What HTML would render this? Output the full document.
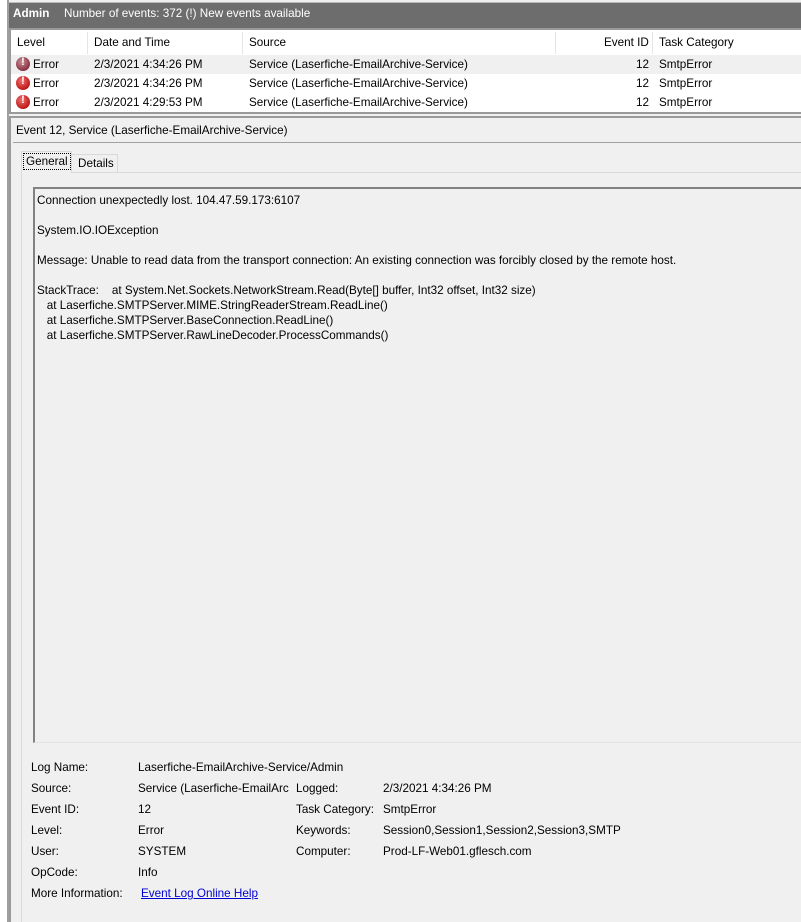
<!DOCTYPE html>
<html><head><style>
*{margin:0;padding:0;box-sizing:border-box}
body{width:801px;height:922px;background:#f0f0f0;font-family:"Liberation Sans",sans-serif;font-size:11.7px;color:#000;position:relative;overflow:hidden}
.a{position:absolute;white-space:nowrap}
.ic{position:absolute;width:14px;height:14px;border-radius:50%;background:radial-gradient(circle at 40% 35%,#f07070,#c01818 70%,#901010);}
.ic:after{content:"!";position:absolute;left:0;width:14px;top:-1px;text-align:center;color:#fff;font-weight:bold;font-size:11px}
</style></head><body>
<div class="a" style="left:0;top:0;width:9px;height:922px;background:#fff;border-right:1px solid #a0a0a0"></div>
<div class="a" style="left:7px;top:0;width:1px;height:922px;background:#a0a0a0"></div>
<div class="a" style="left:9px;top:2px;width:792px;height:26px;background:#6d6d6d;border-top:1px solid #bbb"></div>
<div class="a" style="left:13px;top:7px;color:#fff;font-weight:bold">Admin</div>
<div class="a" style="left:64px;top:7px;color:#fff">Number of events: 372 (!) New events available</div>
<div class="a" style="left:9px;top:28px;width:792px;height:86px;background:#fff;border:2px solid #9a9a9a;border-right:none"></div>
<div class="a" style="left:11px;top:31px;width:790px;height:23px;background:#fff"></div>
<div class="a" style="left:87px;top:32px;width:1px;height:22px;background:#e5e5e5"></div>
<div class="a" style="left:242px;top:32px;width:1px;height:22px;background:#e5e5e5"></div>
<div class="a" style="left:555px;top:32px;width:1px;height:22px;background:#e5e5e5"></div>
<div class="a" style="left:652px;top:32px;width:1px;height:22px;background:#e5e5e5"></div>
<div class="a" style="left:17px;top:36px">Level</div>
<div class="a" style="left:94px;top:36px">Date and Time</div>
<div class="a" style="left:249px;top:36px">Source</div>
<div class="a" style="left:604px;top:36px">Event ID</div>
<div class="a" style="left:659px;top:36px">Task Category</div>
<div class="a" style="left:11px;top:55px;width:790px;height:19px;background:#f0f0f0"></div>
<div class="ic" style="left:16px;top:57px;background:radial-gradient(circle at 40% 35%,#c89098,#8a3040 70%,#602030)"></div>
<div class="a" style="left:33px;top:58px">Error</div><div class="a" style="left:94px;top:58px">2/3/2021 4:34:26 PM</div><div class="a" style="left:249px;top:58px">Service (Laserfiche-EmailArchive-Service)</div><div class="a" style="left:636px;top:58px">12</div><div class="a" style="left:659px;top:58px">SmtpError</div>
<div class="ic" style="left:16px;top:76px"></div>
<div class="a" style="left:33px;top:77px">Error</div><div class="a" style="left:94px;top:77px">2/3/2021 4:34:26 PM</div><div class="a" style="left:249px;top:77px">Service (Laserfiche-EmailArchive-Service)</div><div class="a" style="left:636px;top:77px">12</div><div class="a" style="left:659px;top:77px">SmtpError</div>
<div class="ic" style="left:16px;top:95px"></div>
<div class="a" style="left:33px;top:96px">Error</div><div class="a" style="left:94px;top:96px">2/3/2021 4:29:53 PM</div><div class="a" style="left:249px;top:96px">Service (Laserfiche-EmailArchive-Service)</div><div class="a" style="left:636px;top:96px">12</div><div class="a" style="left:659px;top:96px">SmtpError</div>
<div class="a" style="left:9px;top:116px;width:792px;height:806px;border-top:2px solid #9a9a9a;border-left:2px solid #9a9a9a"></div>
<div class="a" style="left:16px;top:124px">Event 12, Service (Laserfiche-EmailArchive-Service)</div>
<div class="a" style="left:13px;top:142px;width:788px;height:1px;background:#a0a0a0"></div>
<div class="a" style="left:21px;top:172px;width:780px;height:750px;border-top:1px solid #d9d9d9;border-left:1px solid #d9d9d9"></div>
<div class="a" style="left:21px;top:151px;width:51px;height:22px;background:#f0f0f0;border:1px solid #d9d9d9;border-bottom:none"></div>
<div class="a" style="left:23px;top:153px;width:48px;height:17px;border:1px dotted #000"></div>
<div class="a" style="left:26px;top:155px">General</div>
<div class="a" style="left:72px;top:154px;width:46px;height:18px;border:1px solid #d9d9d9;border-left:none;border-bottom:none"></div>
<div class="a" style="left:78px;top:157px">Details</div>
<div class="a" style="left:33px;top:187px;width:768px;height:556px;border-top:2px solid #828282;border-left:2px solid #828282;border-bottom:1px solid #e3e3e3"></div>
<div class="a" style="left:37px;top:193px;line-height:15px;white-space:pre">Connection unexpectedly lost. 104.47.59.173:6107

System.IO.IOException

Message: Unable to read data from the transport connection: An existing connection was forcibly closed by the remote host.

StackTrace:    at System.Net.Sockets.NetworkStream.Read(Byte[] buffer, Int32 offset, Int32 size)
   at Laserfiche.SMTPServer.MIME.StringReaderStream.ReadLine()
   at Laserfiche.SMTPServer.BaseConnection.ReadLine()
   at Laserfiche.SMTPServer.RawLineDecoder.ProcessCommands()</div>
<div class="a" style="left:31px;top:761px">Log Name:</div><div class="a" style="left:138px;top:761px">Laserfiche-EmailArchive-Service/Admin</div>
<div class="a" style="left:31px;top:782px">Source:</div><div class="a" style="left:138px;top:782px">Service (Laserfiche-EmailArc</div><div class="a" style="left:296px;top:782px">Logged:</div><div class="a" style="left:383px;top:782px">2/3/2021 4:34:26 PM</div>
<div class="a" style="left:31px;top:803px">Event ID:</div><div class="a" style="left:138px;top:803px">12</div><div class="a" style="left:296px;top:803px">Task Category:</div><div class="a" style="left:383px;top:803px">SmtpError</div>
<div class="a" style="left:31px;top:824px">Level:</div><div class="a" style="left:138px;top:824px">Error</div><div class="a" style="left:296px;top:824px">Keywords:</div><div class="a" style="left:383px;top:824px">Session0,Session1,Session2,Session3,SMTP</div>
<div class="a" style="left:31px;top:845px">User:</div><div class="a" style="left:138px;top:845px">SYSTEM</div><div class="a" style="left:296px;top:845px">Computer:</div><div class="a" style="left:383px;top:845px">Prod-LF-Web01.gflesch.com</div>
<div class="a" style="left:31px;top:866px">OpCode:</div><div class="a" style="left:138px;top:866px">Info</div>
<div class="a" style="left:31px;top:887px">More Information:</div><div class="a" style="left:141px;top:887px;color:#0000d0;text-decoration:underline">Event Log Online Help</div>
</body></html>
